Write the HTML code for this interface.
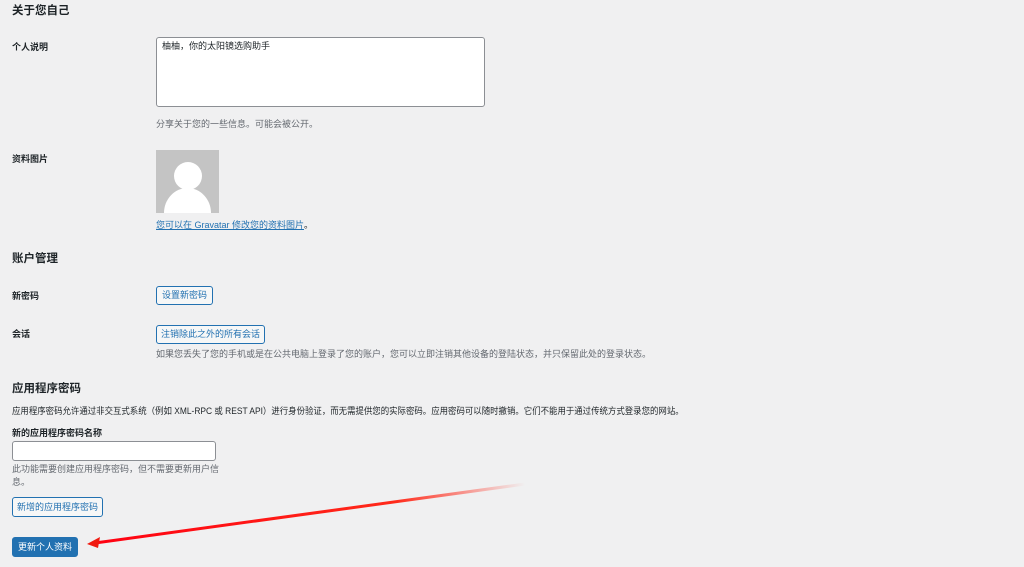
<!DOCTYPE html>
<html><head><meta charset="utf-8"><style>
body{margin:0;width:1024px;height:567px;background:#f0f0f1;font-family:"Liberation Sans","Noto Sans CJK SC",sans-serif;font-size:9px;color:#1d2327;position:relative;overflow:hidden}
.a{position:absolute;white-space:nowrap;line-height:12px}
h2{position:absolute;margin:0;font-size:11.5px;font-weight:600;left:12px;line-height:14px}
.l{font-weight:600;left:12px}
.d{color:#646970}
.btn{position:absolute;border:1px solid #2271b1;color:#2271b1;background:#f6f7f7;border-radius:3px;box-sizing:border-box;font-size:9px;text-align:center;line-height:17px}
</style></head><body>
<h2 style="top:4px">关于您自己</h2>
<div class="a l" style="top:41px">个人说明</div>
<div style="position:absolute;left:156px;top:37px;width:329px;height:70px;box-sizing:border-box;background:#fff;border:1px solid #8c8f94;border-radius:3px"></div>
<div class="a" style="left:162px;top:40px">柚柚，你的太阳镜选购助手</div>
<div class="a d" style="left:156px;top:118px">分享关于您的一些信息。可能会被公开。</div>
<div class="a l" style="top:153px">资料图片</div>
<div style="position:absolute;left:156px;top:150px;width:63px;height:63px;background:#c4c4c4;overflow:hidden">
<div style="position:absolute;left:18px;top:12px;width:28px;height:28px;border-radius:50%;background:#fff"></div>
<div style="position:absolute;left:8px;top:38px;width:47px;height:50px;border-radius:50% 50% 0 0;background:#fff"></div></div>
<div class="a" style="left:156px;top:219px"><span style="color:#2271b1;text-decoration:underline">您可以在 Gravatar 修改您的资料图片</span>。</div>
<h2 style="top:252px">账户管理</h2>
<div class="a l" style="top:290px">新密码</div>
<div class="btn" style="left:156px;top:286px;width:57px;height:19px">设置新密码</div>
<div class="a l" style="top:328px">会话</div>
<div class="btn" style="left:156px;top:325px;width:109px;height:19px">注销除此之外的所有会话</div>
<div class="a d" style="left:156px;top:348px">如果您丢失了您的手机或是在公共电脑上登录了您的账户，您可以立即注销其他设备的登陆状态，并只保留此处的登录状态。</div>
<h2 style="top:382px">应用程序密码</h2>
<div class="a" style="left:12px;top:405px;transform:scaleX(0.935);transform-origin:0 0">应用程序密码允许通过非交互式系统（例如 XML-RPC 或 REST API）进行身份验证，而无需提供您的实际密码。应用密码可以随时撤销。它们不能用于通过传统方式登录您的网站。</div>
<div class="a l" style="top:427px">新的应用程序密码名称</div>
<div style="position:absolute;left:12px;top:441px;width:204px;height:20px;box-sizing:border-box;background:#fff;border:1px solid #8c8f94;border-radius:3px"></div>
<div class="a d" style="left:12px;top:463px">此功能需要创建应用程序密码，但不需要更新用户信</div>
<div class="a d" style="left:12px;top:476px">息。</div>
<div class="btn" style="left:12px;top:497px;width:91px;height:20px;line-height:18px">新增的应用程序密码</div>
<div class="btn" style="left:12px;top:537px;width:66px;height:20px;line-height:18px;background:#2271b1;color:#fff">更新个人资料</div>
<svg style="position:absolute;left:0;top:0" width="1024" height="567"><defs><linearGradient id="g" x1="525" y1="484" x2="90" y2="543" gradientUnits="userSpaceOnUse"><stop offset="0" stop-color="#ff2a1a" stop-opacity="0"/><stop offset="0.3" stop-color="#ff2a1a"/><stop offset="1" stop-color="#f01"/></linearGradient></defs>
<path d="M525 484 L95 543" stroke="url(#g)" stroke-width="3"/>
<path d="M87 544 L100 537 L98 548 Z" fill="#f01a10"/></svg>
</body></html>
